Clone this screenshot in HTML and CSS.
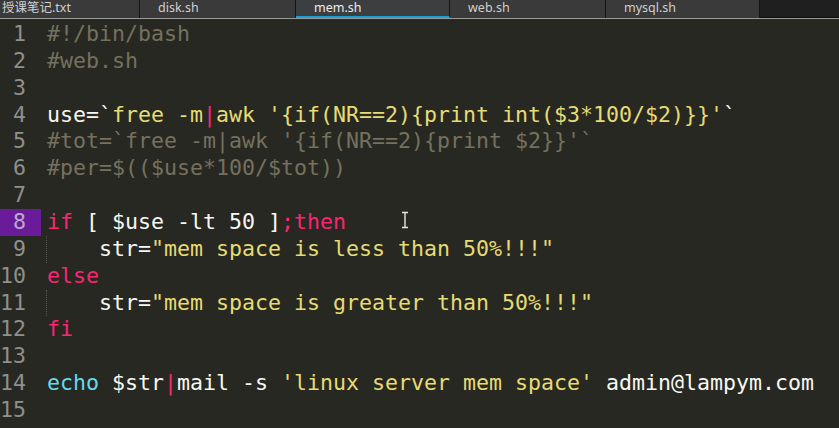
FILE: index.html
```html
<!DOCTYPE html>
<html>
<head>
<meta charset="utf-8">
<link rel="stylesheet" href="styles.css">
</head>
<body>
<div class="tabs">
  <div class="tab first">授课笔记.txt</div>
  <div class="tab w156">disk.sh</div>
  <div class="tab w154 active">mem.sh</div>
  <div class="tab w156">web.sh</div>
  <div class="tab w154">mysql.sh</div>
  <div class="tab-rest"></div>
</div>
<div class="editor">
  <div class="line"><span class="num">1</span><span class="code c">#!/bin/bash</span></div>
  <div class="line"><span class="num">2</span><span class="code c">#web.sh</span></div>
  <div class="line"><span class="num">3</span><span class="code"></span></div>
  <div class="line"><span class="num">4</span><span class="code">use=`<span class="s">free -m</span><span class="k">|</span><span class="s">awk '{if(NR==2){print int($3*100/$2)}}'</span>`</span></div>
  <div class="line"><span class="num">5</span><span class="code c">#tot=`free -m|awk '{if(NR==2){print $2}}'`</span></div>
  <div class="line"><span class="num">6</span><span class="code c">#per=$(($use*100/$tot))</span></div>
  <div class="line"><span class="num">7</span><span class="code"></span></div>
  <div class="line"><span class="num cur">8</span><span class="code"><span class="k">if</span> [ $use -lt 50 ]<span class="k">;then</span></span></div>
  <div class="line"><span class="num">9</span><span class="code guide">    str=<span class="s">"mem space is less than 50%!!!"</span></span></div>
  <div class="line"><span class="num">10</span><span class="code"><span class="k">else</span></span></div>
  <div class="line"><span class="num">11</span><span class="code guide">    str=<span class="s">"mem space is greater than 50%!!!"</span></span></div>
  <div class="line"><span class="num">12</span><span class="code"><span class="k">fi</span></span></div>
  <div class="line"><span class="num">13</span><span class="code"></span></div>
  <div class="line"><span class="num">14</span><span class="code"><span class="f">echo</span> $str<span class="k">|</span>mail -s <span class="s">'linux server mem space'</span> admin@lampym.com</span></div>
  <div class="line"><span class="num">15</span><span class="code"></span></div>
  <svg class="ibeam" width="10" height="18" viewBox="0 0 10 18"><path d="M2 1.5h6M5 1.5v15M2 16.5h6" stroke="#e8e8e8" stroke-width="1.4" fill="none"/></svg>
</div>
</body>
</html>
```
FILE: styles.css
```css
html, body {
  margin: 0;
  padding: 0;
  background: #272822;
  overflow: hidden;
}
.tabs {
  display: flex;
  height: 18px;
  border-bottom: 1px solid #9a9a9a;
  font-family: "Noto Sans", "Noto Sans CJK SC", sans-serif;
  font-size: 12.5px;
  color: #cfcfcf;
}
.tab {
  box-sizing: border-box;
  height: 18px;
  line-height: 16px;
  background: #3a3a3a;
  border-right: 1px solid #141414;
  padding-left: 18px;
  white-space: nowrap;
  overflow: hidden;
}
.tab.first {
  width: 140px;
  padding-left: 2px;
}
.tab.w156 { width: 156px; }
.tab.w154 { width: 154px; }
.tab.active {
  background: #3d3e40;
  color: #ececec;
  border-bottom: 2px solid #1b9bd8;
}
.tab-rest {
  flex: 1;
  background: #1f1f1f;
  border-bottom: 1px solid #0c0c0c;
}
.editor {
  position: relative;
  padding-top: 2px;
  font-family: "DejaVu Sans Mono", monospace;
  font-size: 21.6px;
  color: #f8f8f2;
}
.line {
  display: flex;
  height: 26.86px;
  line-height: 26.86px;
  white-space: pre;
}
.num {
  box-sizing: border-box;
  width: 41px;
  padding-right: 15px;
  text-align: right;
  color: #8f908a;
  flex: none;
}
.num.cur {
  background: #6a1b9a;
  color: #b9a9c9;
}
.code {
  margin-left: 6px;
  position: relative;
}
.guide::before {
  content: "";
  position: absolute;
  left: -1px;
  top: 0;
  bottom: 0;
  border-left: 1px dotted #55564d;
}
.c { color: #75715e; }
.s { color: #e6db74; }
.k { color: #f92672; }
.f { color: #66d9ef; }
.ibeam {
  position: absolute;
  left: 400px;
  top: 192px;
}
```
